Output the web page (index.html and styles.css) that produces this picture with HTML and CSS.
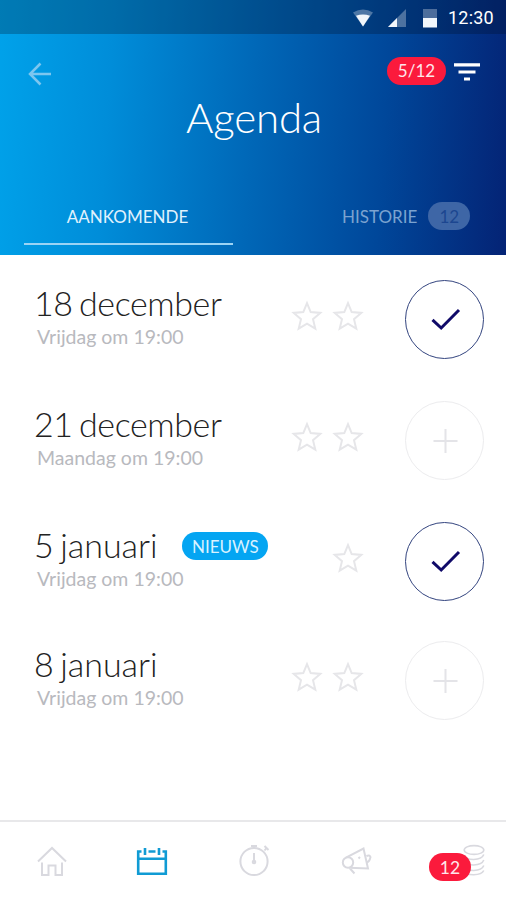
FILE: index.html
```html
<!DOCTYPE html>
<html lang="nl">
<head>
<meta charset="utf-8">
<title>Agenda</title>
<link rel="stylesheet" href="styles.css">
</head>
<body>
<svg class="defs" width="0" height="0">
  <symbol id="star" viewBox="0 0 32 32"><path d="M16 3.200l3.700 8.900 9.600.8-7.300 6.300 2.300 9.400-8.300-5-8.300 5L10 19.200l-7.300-6.300 9.600-.8z"/></symbol>
  <symbol id="check" viewBox="0 0 32 32"><path d="M3.500 15.800l8.700 8.200L30 6"/></symbol>
  <symbol id="plus" viewBox="0 0 32 32"><path d="M16.500 4v24M4.500 16h24"/></symbol>
</svg>
<div class="screen">
  <header class="top">
    <div class="status">
      <svg class="wifi" width="20" height="18" viewBox="0 0 20 18"><path class="dim" d="M0 3.500Q10-2.500 20 3.500L10 17.500z"/><path d="M3 6.800Q10 4 17 6.800L10 17.500z"/></svg>
      <svg class="signal" width="18" height="18" viewBox="0 0 18 18"><path class="dim" d="M18 0v18H0z"/><path d="M9 9v9H0z"/></svg>
      <svg class="battery" width="14" height="20" viewBox="0 0 14 20"><path class="dim" d="M0 1h14v10H0z"/><path d="M0 10h14v9.500H0z"/></svg>
      <span class="clock">12:30</span>
    </div>
    <div class="bar">
      <svg class="back" width="24" height="24" viewBox="0 0 24 24"><path d="M23 12H2M12.500 1.500L2 12l10.500 10.500"/></svg>
      <div class="actions">
        <span class="pill red">5/12</span>
        <svg class="filter" width="26" height="18" viewBox="0 0 26 18"><path d="M0 1.800h26M4.500 9h17M10 16h6"/></svg>
      </div>
    </div>
    <h1>Agenda</h1>
    <nav class="tabs">
      <div class="tab active"><span>AANKOMENDE</span></div>
      <div class="tab history"><span>HISTORIE</span><span class="count">12</span></div>
    </nav>
  </header>
  <main>
    <section class="row">
      <div class="info"><div class="date"><h2>18 december</h2></div><p>Vrijdag om 19:00</p></div>
      <div class="stars"><svg><use href="#star"/></svg><svg><use href="#star"/></svg></div>
      <div class="circle on"><svg><use href="#check"/></svg></div>
    </section>
    <section class="row">
      <div class="info"><div class="date"><h2>21 december</h2></div><p>Maandag om 19:00</p></div>
      <div class="stars"><svg><use href="#star"/></svg><svg><use href="#star"/></svg></div>
      <div class="circle"><svg><use href="#plus"/></svg></div>
    </section>
    <section class="row short">
      <div class="info"><div class="date wide"><h2>5 januari</h2><span class="news">NIEUWS</span></div><p>Vrijdag om 19:00</p></div>
      <div class="stars"><svg><use href="#star"/></svg></div>
      <div class="circle on"><svg><use href="#check"/></svg></div>
    </section>
    <section class="row">
      <div class="info"><div class="date wide"><h2>8 januari</h2></div><p>Vrijdag om 19:00</p></div>
      <div class="stars"><svg><use href="#star"/></svg><svg><use href="#star"/></svg></div>
      <div class="circle"><svg><use href="#plus"/></svg></div>
    </section>
  </main>
  <footer>
    <div class="item"><svg viewBox="0 0 36 36"><path d="M4 18.500L18 5l14 13.500M8 19.500V32h6.500V22.500h7V32H28V19.500"/></svg></div>
    <div class="item current"><svg viewBox="0 0 36 36"><path d="M6.500 8.500H3.200v22.300h27.600V8.500h-3.300M13.500 8.500h7M3.200 15.800h27.600M10 5v7M24 5v7"/></svg></div>
    <div class="item"><svg viewBox="0 0 36 36"><circle cx="18" cy="18.500" r="13.600"/><path d="M18 10v9M15 3h6M18 3v2M28.500 3l4 4M30.500 5l-2 2.500"/><circle cx="18" cy="19" r="1.300"/></svg></div>
    <div class="item"><svg viewBox="0 0 36 36"><circle cx="11" cy="19.500" r="5.200"/><path d="M9 14.700L26.500 5.500l4.500 20-19-.8M13 25.500l4.500 5M21.500 15.500l1.500-1.500M29.500 13q3-1.500 4 1-1 4.500-3 5"/></svg></div>
    <div class="item coins"><svg viewBox="0 0 36 36"><ellipse cx="24" cy="7" rx="9.800" ry="4.400"/><path d="M14.200 12c2 6 17 6 19.600-.5M14.200 17.500c2 6 17 6 19.600-.5M14.200 23c2 6 17 6 19.600-.5M14.200 28c2 5 17 5 19.600-.5"/></svg><span class="pill red">12</span></div>
  </footer>
</div>
</body>
</html>
```
FILE: styles.css
```css
* { box-sizing: border-box; }
body, h1, h2, p { margin: 0; }
body { background: #fff; font-family: Lato, sans-serif; }
.defs { display: block; position: absolute; }
svg { display: block; fill: none; flex: none; }
.screen { width: 506px; height: 900px; display: flex; flex-direction: column; overflow: hidden; }

.top { height: 255px; background: linear-gradient(94deg, #00a2ea 0%, #008dd9 22%, #0067b7 50%, #00479a 75%, #042375 100%); color: #fff; }
.status { height: 34px; background: rgba(0, 10, 30, .26); display: flex; align-items: center; justify-content: flex-end; padding: 2px 12px 0 0; }
.status svg { fill: #f1f6fb; }
.status .dim { fill: #fff; opacity: .3; }
.signal { margin-left: 15px; }
.battery { margin-left: 17px; }
.clock { margin-left: 11px; width: 46px; font: 400 18px/32px Roboto, sans-serif; white-space: nowrap; letter-spacing: .2px; }
.bar { height: 73px; display: flex; align-items: center; justify-content: space-between; padding: 0 26px 0 28px; }
.back { margin-top: 6px; stroke: #7cc6ef; stroke-width: 2.500; }
.actions { display: flex; align-items: center; gap: 8px; }
.filter { stroke: #fff; stroke-width: 3.200; margin-top: 2px; }
.pill { display: flex; align-items: center; justify-content: center; color: #ffe6ea; border-radius: 14px; }
.red { background: #fb1a3c; }
.actions .pill { width: 59px; height: 28px; font-size: 17px; }
h1 { font-size: 42px; line-height: 50px; font-weight: 300; text-align: center; margin-top: -15px; height: 86px; letter-spacing: -.2px; padding-left: 2px; }
.tabs { display: flex; padding-left: 24px; height: 66px; justify-content: space-between; font-size: 17px; }
.tab { display: flex; align-items: center; height: 67px; padding-top: 12px; }
.active { width: 209px; border-bottom: 2px solid #9bd3f4; justify-content: center; color: #e0f2fd; padding-right: 2px; }
.history { width: 164px; padding-top: 9px; gap: 11px; color: #7ba3d0; }
.count { width: 42px; height: 28px; border-radius: 14px; background: #3e66a6; color: #1c4690; display: flex; align-items: center; justify-content: center; }

main { flex: 1; padding: 25px 22px 0 34px; }
.row { height: 121px; display: flex; align-items: flex-start; }
.short { height: 119px; }
.info { flex: 1; padding-top: 2px; }
.date { display: flex; align-items: center; height: 42px; }
h2 { font-size: 34px; line-height: 42px; font-weight: 300; color: #222; white-space: nowrap; letter-spacing: -.4px; word-spacing: -2.500px; }
.wide h2 { letter-spacing: -.05px; }
.info p { font-size: 19.500px; line-height: 24px; color: #b8b9be; padding: 0 0 0 3px; margin-top: 1px; }
.news { width: 86px; height: 28px; margin: 2px 0 0 25px; border-radius: 14px; background: #04a5f2; color: #d9f2ff; font-size: 17px; display: flex; align-items: center; justify-content: center; }
.stars { display: flex; gap: 9px; margin: 20px 41px 0 0; }
.stars svg { width: 32px; height: 32px; stroke: #e6e6e9; stroke-width: 2; }
.circle { width: 79px; height: 79px; border: 1.500px solid #ececee; border-radius: 50%; display: flex; align-items: center; justify-content: center; }
.circle svg { width: 32px; height: 32px; stroke: #e4e4e8; stroke-width: 2; }
.circle.on { border-color: #34457f; }
.circle.on svg { stroke: #100a68; stroke-width: 3; }

footer { height: 80px; border-top: 2px solid #e8e8ea; display: flex; padding-left: 1px; }
.item { width: 101px; display: flex; align-items: center; justify-content: center; position: relative; }
.item svg { width: 36px; height: 36px; stroke: #d9d9df; stroke-width: 2; }
.item.current svg { stroke: #109bd4; stroke-width: 2.600; }
.item.coins svg { margin-left: 25px; stroke-width: 1.600; }
.coins .pill { position: absolute; left: 24px; top: 31px; width: 42px; height: 28px; font-size: 17.500px; }
```
